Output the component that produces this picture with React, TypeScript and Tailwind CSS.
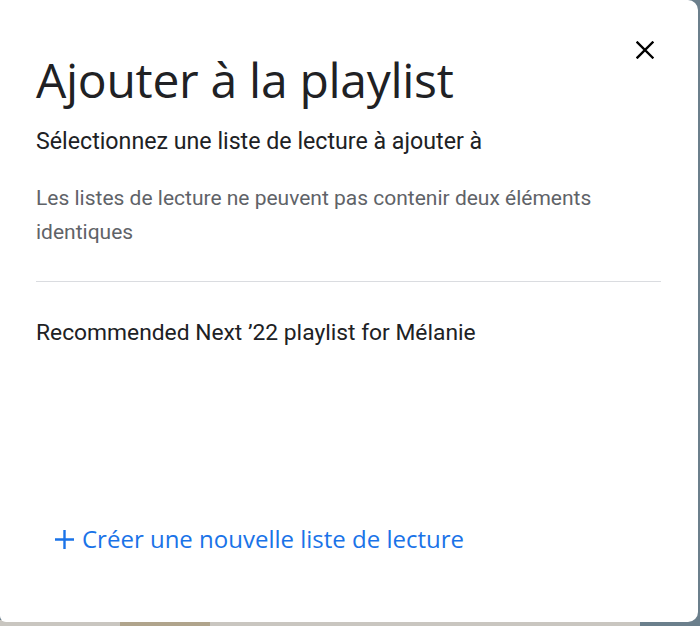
import React from "react";

export default function App() {
  return (
    <div className="relative h-[626px] w-[700px] overflow-hidden bg-[#6b7f8c]">
      <div className="absolute bottom-0 left-0 h-[6px] w-[640px] bg-[#c9c6c0]" />
      <div className="absolute bottom-0 left-[120px] h-[6px] w-[90px] bg-[#b0a48c]" />
      <div className="relative flex h-[622px] w-[698px] flex-col rounded-br-[10px] rounded-tr-[10px] rounded-bl-[6px] bg-white pl-[36px] pr-[37px]">
        <button className="absolute right-[44px] top-[41px] flex h-[18px] w-[18px] items-center justify-center">
          <svg width="18" height="18" viewBox="0 0 18 18" fill="none">
            <path d="M1.5 1.5 L16.5 16.5 M16.5 1.5 L1.5 16.5" stroke="#000" strokeWidth="2.4" strokeLinecap="square" />
          </svg>
        </button>
        <h1 className="mt-[52px] font-['Open_Sans',sans-serif] text-[48px] leading-[56px] tracking-[-0.3px] text-[#202124]">
          Ajouter à la playlist
        </h1>
        <p className="mt-[19px] font-['Roboto',sans-serif] text-[23.2px] leading-[28px] text-[#202124]">
          Sélectionnez une liste de lecture à ajouter à
        </p>
        <p className="mt-[26px] font-['Roboto',sans-serif] text-[21px] leading-[34px] text-[#5f6368]">
          Les listes de lecture ne peuvent pas contenir deux éléments identiques
        </p>
        <div className="mt-[32px] h-px w-full bg-[#dadce0]" />
        <p className="mt-[37px] font-['Roboto',sans-serif] text-[22.8px] leading-[28px] text-[#202124]">
          Recommended Next ’22 playlist for Mélanie
        </p>
        <button className="mt-[178px] ml-[18px] flex items-center gap-[7px] text-[#1a73e8]">
          <svg width="21" height="21" viewBox="0 0 21 21" fill="none">
            <path d="M10.5 1 V20 M1 10.5 H20" stroke="#1a73e8" strokeWidth="2.4" />
          </svg>
          <span className="font-['Open_Sans',sans-serif] text-[24px] leading-[28px] font-medium">
            Créer une nouvelle liste de lecture
          </span>
        </button>
      </div>
    </div>
  );
}
